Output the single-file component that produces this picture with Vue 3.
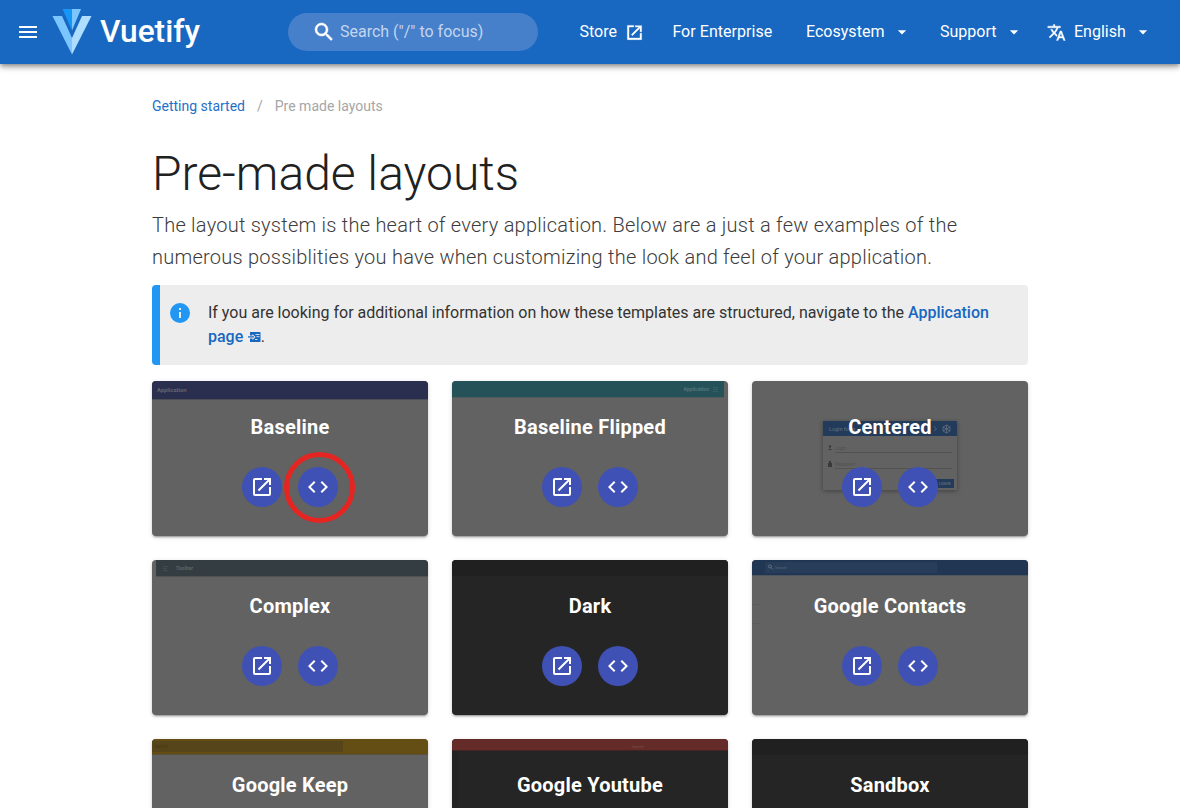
<script setup>
const icons = {
  menu: 'M3,6H21V8H3V6M3,11H21V13H3V11M3,16H21V18H3V16Z',
  search: 'M9.5,3A6.5,6.5 0 0,1 16,9.5C16,11.11 15.41,12.59 14.44,13.73L14.71,14H15.5L20.5,19L19,20.5L14,15.5V14.71L13.73,14.44C12.59,15.41 11.11,16 9.5,16A6.5,6.5 0 0,1 3,9.5A6.5,6.5 0 0,1 9.5,3M9.5,5C7,5 5,7 5,9.5C5,12 7,14 9.5,14C12,14 14,12 14,9.5C14,7 12,5 9.5,5Z',
  open: 'M14,3V5H17.59L7.76,14.83L9.17,16.24L19,6.41V10H21V3M19,19H5V5H12V3H5C3.89,3 3,3.9 3,5V19A2,2 0 0,0 5,21H19A2,2 0 0,0 21,19V12H19V19Z',
  openSquare: 'M13,3V5H17.59L8,14.6L9.4,16L19,6.41V11H21V3M19,19H5V5H11V3H3V21H21V13H19V19Z',
  code: 'M14.6,16.6L19.2,12L14.6,7.4L16,6L22,12L16,18L14.6,16.6M9.4,16.6L4.8,12L9.4,7.4L8,6L2,12L8,18L9.4,16.6Z',
  down: 'M7,10L12,15L17,10H7Z',
  translate: 'M12.87,15.07L10.33,12.56L10.36,12.53C12.1,10.59 13.34,8.36 14.07,6H17V4H10V2H8V4H1V6H12.17C11.5,7.92 10.44,9.75 9,11.35C8.07,10.32 7.3,9.19 6.69,8H4.69C5.42,9.63 6.42,11.17 7.67,12.56L2.58,17.58L4,19L9,14L12.11,17.11L12.87,15.07M18.5,10H16.5L12,22H14L15.12,19H19.87L21,22H23L18.5,10M15.88,17L17.5,12.67L19.12,17H15.88Z',
  info: 'M13,9H11V7H13M13,17H11V11H13M12,2A10,10 0 0,0 2,12A10,10 0 0,0 12,22A10,10 0 0,0 22,12A10,10 0 0,0 12,2Z',
}

const layouts = [
  { id: 'baseline', title: 'Baseline', circled: true },
  { id: 'flipped', title: 'Baseline Flipped' },
  { id: 'centered', title: 'Centered' },
  { id: 'complex', title: 'Complex' },
  { id: 'dark', title: 'Dark', dark: true },
  { id: 'contacts', title: 'Google Contacts' },
  { id: 'keep', title: 'Google Keep' },
  { id: 'youtube', title: 'Google Youtube', dark: true },
  { id: 'sandbox', title: 'Sandbox', dark: true },
]
</script>

<template>
  <div class="page">
    <header class="bar">
      <svg class="menu" width="24" height="24" viewBox="0 0 24 24"><path :d="icons.menu" /></svg>
      <svg class="logo" width="40" height="46" viewBox="0 0 40 46">
        <path fill="#1697f6" d="M10.500 0H20V21.500Z" />
        <path fill="#7bc6ff" d="M20 0H29L20 21.500Z" />
        <path fill="#7bc6ff" d="M.5 7H10L20 29V45.500Z" />
        <path fill="#aeddff" d="M39.500 7H30L20 29V45.500Z" />
      </svg>
      <span class="brand">Vuetify</span>
      <div class="search">
        <svg class="bold" width="24" height="24" viewBox="0 0 24 24"><path :d="icons.search" /></svg>
        <span>Search ("/" to focus)</span>
      </div>
      <nav class="nav">
        <a class="store"><span>Store</span><svg class="bold" width="19" height="19" viewBox="0 0 24 24"><path :d="icons.openSquare" /></svg></a>
        <a class="enterprise"><span>For Enterprise</span></a>
        <a class="ecosystem"><span>Ecosystem</span><svg width="20" height="20" viewBox="0 0 24 24"><path :d="icons.down" /></svg></a>
        <a class="support"><span>Support</span><svg width="20" height="20" viewBox="0 0 24 24"><path :d="icons.down" /></svg></a>
        <a class="language">
          <svg class="bold translate" width="19" height="19" viewBox="0 0 24 24"><path :d="icons.translate" /></svg>
          <span>English</span><svg width="20" height="20" viewBox="0 0 24 24"><path :d="icons.down" /></svg>
        </a>
      </nav>
    </header>

    <main class="content">
      <div class="crumbs"><a>Getting started</a><span class="slash">/</span><span class="here">Pre made layouts</span></div>
      <h1>Pre-made layouts</h1>
      <p class="lead-text">The layout system is the heart of every application. Below are a just a few examples of the<br />numerous possiblities you have when customizing the look and feel of your application.</p>

      <div class="alert">
        <svg class="info" width="24" height="24" viewBox="0 0 24 24"><path :d="icons.info" /></svg>
        <div class="alert-text">
          If you are looking for additional information on how these templates are structured, navigate to the <b>Application</b><br /><b>page</b>
          <svg class="page-icon" width="13" height="12" viewBox="0 0 13 12">
            <path fill="#1867c0" d="M3 1H11.800Q12.500 1 12.500 1.700V10.300Q12.500 11 11.800 11H3Q2 11 2 10V7.500H4.500V9L7.500 6L4.500 3V4.500H2V2Q2 1 3 1Z" />
            <path fill="#1867c0" d="M2 1H12V3H2ZM2 9H12V11H2ZM0 5.200H6V6.600H0Z" />
            <path stroke="#ededed" stroke-width=".9" d="M7.500 3.500H11.500M8.500 5.700H11.500M7 8.500H9.500" />
          </svg>.
        </div>
      </div>

      <section class="grid">
        <article v-for="item in layouts" :key="item.id" class="card" :class="{ dark: item.dark }">
          <svg class="thumb" width="276" height="155" viewBox="0 0 276 155">
            <g v-if="item.id === 'baseline'">
              <path fill="#2a2f50" d="M0 0H276V18H0Z" />
              <path fill="#4d4e55" d="M0 18H276V19H0Z" />
              <text x="5" y="11" font-size="5.800" font-weight="700" fill="#62656f">Application</text>
            </g>
            <g v-else-if="item.id === 'flipped'">
              <path fill="#245258" d="M0 0H272V16H0Z" />
              <path fill="#535b5c" d="M0 16H272V17H0Z" />
              <text x="231.500" y="10" font-size="5" font-weight="700" fill="#567377">Application</text>
              <path stroke="#3e686d" stroke-width=".7" d="M261 6.500H266M261 8.500H266M261 10.500H266" />
            </g>
            <g v-else-if="item.id === 'centered'">
              <path class="panel" fill="#626262" d="M71 40H205V109H71Z" />
              <path fill="#233b5b" d="M71 40H205V55H71Z" />
              <text x="77" y="50" font-size="5.400" font-weight="500" fill="#596778">Login form</text>
              <path fill="none" stroke="#687483" stroke-width=".7" d="M182 45.500L184.500 47.800L182 50M191 46L194.500 44L198 46V50L194.500 52L191 50ZM191 46L198 50M198 46L191 50M194.500 44V52" />
              <circle cx="78" cy="65.500" r="1.200" fill="#393939" />
              <path fill="#393939" d="M76 69Q78 66.500 80 69ZM76 82H80V86H76ZM77 80H79V82H77Z" />
              <path stroke="#4c4c4c" stroke-width=".7" d="M83 71.500H200M83 87.500H200" />
              <text x="83" y="68.500" font-size="4.500" fill="#505050">Login</text>
              <text x="83" y="84.800" font-size="4.500" fill="#505050">Password</text>
              <path fill="#233b5b" d="M181 98H202V107H181Z" />
              <text x="187" y="104" font-size="4" font-weight="500" fill="#64717f">LOGIN</text>
            </g>
            <g v-else-if="item.id === 'complex'">
              <path fill="#343d42" d="M4 0H276V16H4Z" />
              <path fill="#505355" d="M4 16H276V17H4Z" />
              <path stroke="#4b5256" stroke-width=".7" d="M11 6.500H16M11 8.500H15M11 10.500H16" />
              <text x="24" y="10" font-size="5" font-weight="700" fill="#5d6568">Toolbar</text>
            </g>
            <g v-else-if="item.id === 'contacts'">
              <path fill="#213653" d="M0 0H276V15H0Z" />
              <path fill="#283d5a" d="M13 2H185V13H13Z" />
              <path fill="#4d5560" d="M0 15H276V16H0Z" />
              <circle cx="18" cy="6.500" r="1.500" fill="none" stroke="#6c7785" stroke-width=".8" />
              <path stroke="#6c7785" stroke-width=".8" d="M19 7.500L21 9.500" />
              <text x="23" y="9" font-size="3.800" fill="#5a697e">Search</text>
              <path stroke="#5a5a5a" stroke-width=".7" d="M0 44.500H8M0 63.500H8" />
            </g>
            <g v-else-if="item.id === 'keep'">
              <path fill="#654e14" d="M0 0H276V15H0Z" />
              <path fill="#56441b" d="M0 2H191V13H0Z" />
              <path fill="#57513f" d="M0 15H276V16H0Z" />
              <text x="2" y="9" font-size="4.500" fill="#473914">Search</text>
            </g>
            <g v-else-if="item.id === 'youtube'">
              <path fill="#222" d="M0 11H6V155H0Z" />
              <path fill="#652b29" d="M0 0H276V11H0Z" />
              <path fill="#422424" d="M0 11H276V12H0Z" />
              <text x="179.500" y="8.500" font-size="4" fill="#7a4e4b">Search</text>
            </g>
            <path v-else fill="#202020" d="M0 0H276V16H0Z" />
          </svg>
          <h2>{{ item.title }}</h2>
          <div class="actions">
            <span class="fab"><svg width="24" height="24" viewBox="0 0 24 24"><path :d="icons.open" /></svg></span>
            <span class="fab"><svg width="24" height="24" viewBox="0 0 24 24"><path :d="icons.code" /></svg><i v-if="item.circled" class="ring"></i></span>
          </div>
        </article>
      </section>
    </main>
  </div>
</template>

<style>
body { background: #fff; overflow: hidden; }
</style>

<style scoped>
.page { width: 1180px; height: 808px; overflow: hidden; font-family: Roboto, "Liberation Sans", sans-serif; color: #212121; }
svg { display: block; flex: none; }
.bold path { stroke: #fff; stroke-width: .5; }
.bar { display: flex; align-items: center; box-sizing: border-box; height: 64px; padding-left: 16px; background: #1867c0; color: #fff; fill: #fff; position: relative; box-shadow: 0 2px 4px -1px rgba(0,0,0,.3), 0 4px 5px rgba(0,0,0,.18), 0 1px 10px rgba(0,0,0,.14); }
.logo { margin-left: 12px; }
.brand { width: 188px; margin-left: 8px; box-sizing: border-box; font-size: 31.700px; font-weight: 500; line-height: 40px; white-space: nowrap; }
.search { display: flex; align-items: center; box-sizing: border-box; width: 250px; height: 38px; padding-left: 24px; border-radius: 19px; background: #467fca; color: #c3d6ef; font-size: 16px; }
.search span { margin-left: 4px; padding-bottom: 2px; white-space: nowrap; }
.nav { display: flex; align-items: center; font-size: 16px; letter-spacing: .04px; white-space: nowrap; }
.nav a { display: flex; align-items: center; }
.nav span { padding-bottom: 2px; }
.store { width: 93px; margin-left: 41.400px; }
.store svg { margin-left: 8px; }
.enterprise { width: 133.500px; }
.ecosystem { width: 134px; }
.ecosystem svg, .support svg { margin-left: 7px; }
.support { width: 107px; }
.translate { margin-top: 1px; }
.language span { margin: 0 7px 0 8px; }
.content { width: 876px; margin: 0 auto; padding-top: 32px; }
.crumbs { display: flex; height: 20px; font-size: 14px; line-height: 20px; color: #a6a6a6; }
.crumbs a { color: #1f70c9; }
.slash { margin: 0 12px; }
h1 { margin: 34px 0 0; font-size: 48px; font-weight: 300; line-height: 48px; height: 59px; }
.lead-text { margin: 0; height: 64px; font-size: 20px; font-weight: 300; line-height: 32px; letter-spacing: .24px; white-space: nowrap; color: #3c3c3c; }
.alert { display: flex; box-sizing: border-box; height: 80px; margin-top: 12px; border-left: 8px solid #2196f3; border-radius: 4px; background: #ededed; padding: 16px 0 0 8px; }
.info { fill: #2196f3; }
.alert-text { margin-left: 16px; font-size: 16px; line-height: 24px; letter-spacing: -.006px; white-space: nowrap; color: #333; }
.alert b { font-weight: 500; color: #1867c0; }
.page-icon { display: inline-block; margin-left: 4.500px; vertical-align: -1px; }
.grid { display: grid; grid-template-columns: repeat(3, 276px); grid-auto-rows: 155px; gap: 24px; margin-top: 16px; }
.card { position: relative; border-radius: 4px; background: #626262; box-shadow: 0 3px 1px -2px rgba(0,0,0,.2), 0 2px 2px rgba(0,0,0,.14), 0 1px 5px rgba(0,0,0,.12); }
.dark { background: #252525; }
.thumb { position: absolute; inset: 0; border-radius: 4px; }
.panel { filter: drop-shadow(0 1px 2px rgba(0,0,0,.35)); }
h2 { position: relative; margin: 0; padding-top: 30px; height: 56px; font-size: 20px; line-height: 32px; font-weight: 700; letter-spacing: .22px; text-align: center; color: #fff; }
.actions { position: relative; display: flex; justify-content: center; gap: 16px; }
.fab { position: relative; display: flex; align-items: center; justify-content: center; width: 40px; height: 40px; border-radius: 50%; background: #3f51b5; fill: #fff; }
.ring { position: absolute; left: -14.500px; top: -15.500px; box-sizing: border-box; width: 71px; height: 71px; border: 5px solid #e52521; border-radius: 50%; }
</style>
